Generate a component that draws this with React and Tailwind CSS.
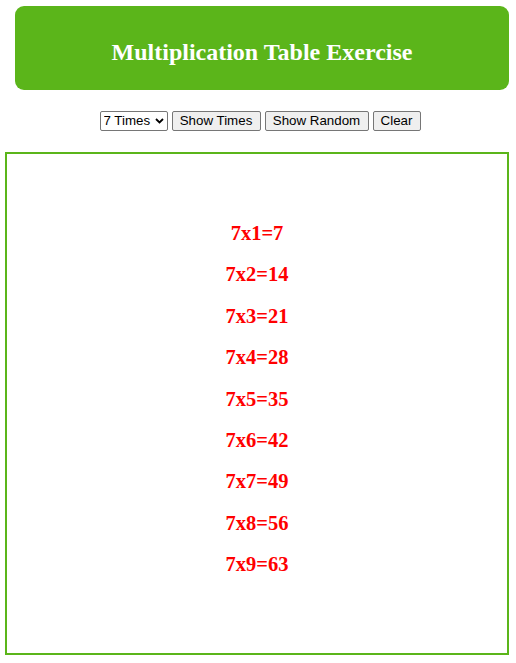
import { useState } from "react";

const TIMES = [2, 3, 4, 5, 6, 7, 8, 9];

const App = () => {
  const [n, setN] = useState(7);
  const [rows, setRows] = useState([1, 2, 3, 4, 5, 6, 7, 8, 9]);

  return (
    <div className="w-[516px] min-h-[663px] bg-white pt-[6px] font-['Liberation_Serif',serif]">
      {/* header */}
      <div className="ml-[15px] w-[494px] h-[84px] rounded-[9px] bg-[#5bb51a] flex items-center justify-center">
        <h1 className="text-white font-bold text-[24px] leading-none pt-[8px]">
          Multiplication Table Exercise
        </h1>
      </div>

      {/* controls */}
      <div className="mt-[21px] h-[20px] flex items-center justify-center gap-[4px] pl-[4px] font-['Liberation_Sans',Arial,sans-serif] text-[13.33px] text-black">
        <div className="relative">
          <select
            value={n}
            onChange={(e) => setN(Number(e.target.value))}
            className="appearance-none h-[20px] w-[68px] border border-[#767676] rounded-[2px] bg-white pl-[3px] text-[13.33px] leading-none"
          >
            {TIMES.map((t) => (
              <option key={t} value={t}>
                {t} Times
              </option>
            ))}
          </select>
          <svg
            className="absolute right-[4px] top-[7px] pointer-events-none"
            width="9"
            height="6"
            viewBox="0 0 9 6"
          >
            <path d="M1 1 L4.5 4.5 L8 1" fill="none" stroke="#000" strokeWidth="1.8" />
          </svg>
        </div>
        <button
          onClick={() => setRows([1, 2, 3, 4, 5, 6, 7, 8, 9])}
          className="h-[20px] w-[89px] border border-[#767676] rounded-[2px] bg-[#efefef] leading-none"
        >
          Show Times
        </button>
        <button
          onClick={() => setRows([1 + Math.floor(Math.random() * 9)])}
          className="h-[20px] w-[104px] border border-[#767676] rounded-[2px] bg-[#efefef] leading-none"
        >
          Show Random
        </button>
        <button
          onClick={() => setRows([])}
          className="h-[20px] w-[48px] border border-[#767676] rounded-[2px] bg-[#efefef] leading-none"
        >
          Clear
        </button>
      </div>

      {/* results box */}
      <div className="mt-[21px] ml-[5px] w-[504px] h-[503px] border-2 border-[#5bb51a] flex flex-col items-center pt-[68px]">
        {rows.map((i) => (
          <h3
            key={i}
            className="text-[#ff0000] font-bold text-[20.5px] leading-[23px] h-[41.4px] shrink-0"
          >
            {n}x{i}={n * i}
          </h3>
        ))}
      </div>
    </div>
  );
};

export default App;
